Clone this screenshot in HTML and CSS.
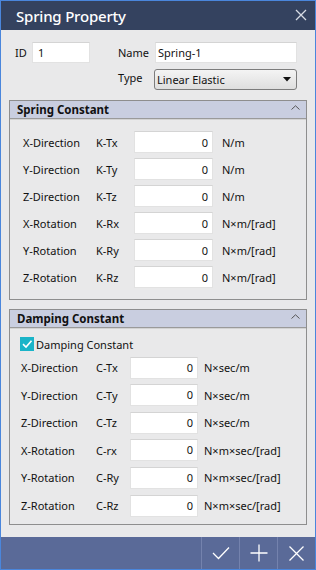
FILE: index.html
```html
<!DOCTYPE html>
<html>
<head>
<meta charset="utf-8">
<link rel="stylesheet" href="styles.css">
</head>
<body>
<div class="window">
  <div class="titlebar">
    <span class="title">Spring Property</span>
    <svg class="close" width="12" height="12" viewBox="0 0 12 12"><path d="M1 1 L11 11 M11 1 L1 11" stroke="#d7dbe4" stroke-width="1.3" fill="none"/></svg>
  </div>
  <div class="content">
    <div class="top">
      <div class="top-left">
        <span class="lbl-id">ID</span>
        <div class="field field-id">1</div>
      </div>
      <div class="top-right">
        <div class="frow">
          <span class="lbl-name">Name</span>
          <div class="field field-name">Spring-1</div>
        </div>
        <div class="frow">
          <span class="lbl-name lbl-type">Type</span>
          <div class="select">
            <span>Linear Elastic</span>
            <svg width="8" height="5" viewBox="0 0 8 5"><path d="M0 0 H8 L4 4.5 Z" fill="#111"/></svg>
          </div>
        </div>
      </div>
    </div>

    <section class="panel">
      <div class="panel-head">
        <span>Spring Constant</span>
        <svg class="caret" width="9" height="5" viewBox="0 0 9 5"><path d="M0.5 4.5 L4.5 0.8 L8.5 4.5" stroke="#555" stroke-width="1" fill="none"/></svg>
      </div>
      <div class="panel-body spring">
        <div class="row"><span class="c1">X-Direction</span><span class="c2">K-Tx</span><div class="field num">0</div><span class="unit">N/m</span></div>
        <div class="row"><span class="c1">Y-Direction</span><span class="c2">K-Ty</span><div class="field num">0</div><span class="unit">N/m</span></div>
        <div class="row"><span class="c1">Z-Direction</span><span class="c2">K-Tz</span><div class="field num">0</div><span class="unit">N/m</span></div>
        <div class="row"><span class="c1">X-Rotation</span><span class="c2">K-Rx</span><div class="field num">0</div><span class="unit">N×m/[rad]</span></div>
        <div class="row"><span class="c1">Y-Rotation</span><span class="c2">K-Ry</span><div class="field num">0</div><span class="unit">N×m/[rad]</span></div>
        <div class="row"><span class="c1">Z-Rotation</span><span class="c2">K-Rz</span><div class="field num">0</div><span class="unit">N×m/[rad]</span></div>
      </div>
    </section>

    <section class="panel panel2">
      <div class="panel-head">
        <span>Damping Constant</span>
        <svg class="caret" width="9" height="5" viewBox="0 0 9 5"><path d="M0.5 4.5 L4.5 0.8 L8.5 4.5" stroke="#555" stroke-width="1" fill="none"/></svg>
      </div>
      <div class="panel-body damping">
        <div class="check-row">
          <span class="checkbox"><svg width="14" height="14" viewBox="0 0 14 14"><path d="M3 7.2 L6 10 L11.5 3.8" stroke="#fff" stroke-width="1.6" fill="none"/></svg></span>
          <span>Damping Constant</span>
        </div>
        <div class="row"><span class="c1">X-Direction</span><span class="c2">C-Tx</span><div class="field num">0</div><span class="unit">N×sec/m</span></div>
        <div class="row"><span class="c1">Y-Direction</span><span class="c2">C-Ty</span><div class="field num">0</div><span class="unit">N×sec/m</span></div>
        <div class="row"><span class="c1">Z-Direction</span><span class="c2">C-Tz</span><div class="field num">0</div><span class="unit">N×sec/m</span></div>
        <div class="row"><span class="c1">X-Rotation</span><span class="c2">C-rx</span><div class="field num">0</div><span class="unit">N×m×sec/[rad]</span></div>
        <div class="row"><span class="c1">Y-Rotation</span><span class="c2">C-Ry</span><div class="field num">0</div><span class="unit">N×m×sec/[rad]</span></div>
        <div class="row"><span class="c1">Z-Rotation</span><span class="c2">C-Rz</span><div class="field num">0</div><span class="unit">N×m×sec/[rad]</span></div>
      </div>
    </section>
  </div>
  <div class="footer">
    <div class="fbtn"><svg width="18" height="14" viewBox="0 0 18 14"><path d="M1 7 L6.5 12.5 L17 1.5" stroke="#fff" stroke-width="1.3" fill="none"/></svg></div>
    <div class="fbtn"><svg width="18" height="18" viewBox="0 0 18 18"><path d="M9 0.5 V17.5 M0.5 9 H17.5" stroke="#fff" stroke-width="1.3" fill="none"/></svg></div>
    <div class="fbtn"><svg width="15" height="15" viewBox="0 0 15 15"><path d="M0.5 0.5 L14.5 14.5 M14.5 0.5 L0.5 14.5" stroke="#fff" stroke-width="1.3" fill="none"/></svg></div>
  </div>
</div>
</body>
</html>
```

FILE: styles.css
```css
* { box-sizing: border-box; }
html, body { margin: 0; padding: 0; }
body {
  font-family: "Noto Sans", "Open Sans", sans-serif;
  font-size: 11px;
  color: #111;
  background: #e9e9ea;
}
.window {
  width: 316px;
  height: 570px;
  border: 1px solid #4a86dc;
  display: flex;
  flex-direction: column;
  background: #e9e9ea;
}
.titlebar {
  height: 29px;
  background: #34425f;
  display: flex;
  align-items: center;
  justify-content: space-between;
  padding: 0 8px 0 15px;
}
.title {
  color: #fff;
  font-size: 15px;
  font-weight: 500;
  letter-spacing: -0.2px;
}
.close { margin-top: -1px; }
.content {
  flex: 1;
  padding: 12px 8px 0 8px;
}
.top {
  display: flex;
  padding-left: 6px;
  margin-bottom: 10px;
}
.top-left {
  display: flex;
  align-items: center;
  height: 21px;
}
.lbl-id { width: 17px; }
.field {
  height: 21px;
  background: #fff;
  border: 1px solid #e2e2e2;
  border-top-color: #d4d4d4;
  display: flex;
  align-items: center;
  padding: 0 5px;
}
.field-id { width: 58px; }
.top-right {
  margin-left: 28px;
  display: flex;
  flex-direction: column;
  gap: 6px;
}
.frow { display: flex; align-items: center; }
.lbl-name { width: 37px; }
.lbl-type { margin-top: -5px; }
.field-name { width: 142px; padding-left: 2px; }
.select {
  width: 143px;
  height: 21px;
  margin-left: -1px;
  border: 1px solid #7c7c7c;
  border-radius: 3px;
  background: linear-gradient(#f4f4f4, #dedede);
  display: flex;
  align-items: center;
  justify-content: space-between;
  padding: 0 5px 0 2px;
}
.panel {
  border: 1px solid #8e8e8e;
}
.panel2 { margin-top: 9px; }
.panel-head {
  height: 18px;
  background: #c9cee0;
  border-bottom: 1px solid #9a9a9a;
  box-shadow: 0 1px 0 #d3d3d3;
  display: flex;
  align-items: center;
  justify-content: space-between;
  padding: 0 6px 0 7px;
  font-weight: 700;
  font-size: 11.5px;
}
.caret { margin-top: -4px; }
.panel-body {
  display: flex;
  flex-direction: column;
}
.spring {
  padding: 12px 0 11px 13px;
  gap: 5px;
}
.row {
  display: flex;
  align-items: center;
  height: 22px;
}
.num {
  justify-content: flex-end;
  padding-right: 4px;
  height: 22px;
}
.spring .c1 { width: 73px; }
.spring .c2 { width: 38px; }
.spring .num { width: 79px; }
.spring .unit { margin-left: 9px; }
.damping {
  padding: 9px 0 7px 11px;
  gap: 5.6px;
}
.check-row {
  display: flex;
  align-items: center;
  height: 14px;
  margin-left: -1px;
  gap: 2px;
}
.checkbox {
  width: 14px;
  height: 14px;
  background: #1ab4c8;
  display: flex;
}
.damping .c1 { width: 75px; }
.damping .c2 { width: 34px; }
.damping .num { width: 68px; align-items: flex-start; padding-top: 2px; }
.damping .unit { margin-left: 6px; }
.footer {
  height: 32px;
  background: #5a6a98;
  display: flex;
  justify-content: flex-end;
}
.fbtn {
  width: 38px;
  border-left: 1px solid #7482ad;
  display: flex;
  align-items: center;
  justify-content: center;
}
```
